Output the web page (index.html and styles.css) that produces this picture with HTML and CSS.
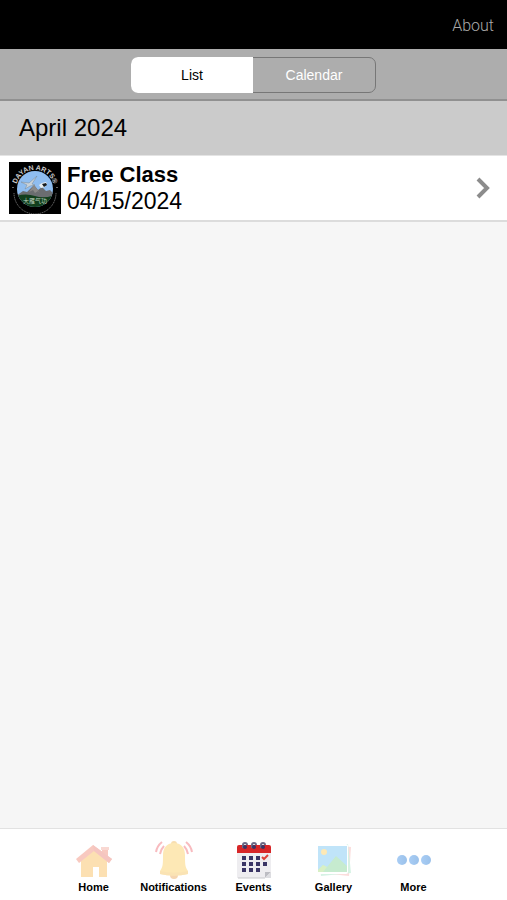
FILE: index.html
```
<!DOCTYPE html>
<html lang="en">
<head>
    <meta charset="UTF-8">
    <meta name="viewport" content="width=device-width, initial-scale=1.0">
    <title>Events</title>
    <link rel="stylesheet" href="styles.css">
</head>
<body>
    <div id="app">
        <header class="topbar">
            <a href="#about">About</a>
        </header>
        <div class="toolbar">
            <div class="switch">
                <button type="button" class="active" aria-pressed="true">List</button>
                <button type="button" aria-pressed="false">Calendar</button>
            </div>
        </div>
        <main>
            <h2 class="month">April 2024</h2>
            <a class="event" href="#event">
                <svg class="logo" viewBox="0 0 52 52" aria-hidden="true">
                    <defs>
                        <clipPath id="disc"><circle cx="26" cy="27" r="18"/></clipPath>
                        <path id="arc" d="M7 27a19 19 0 0 1 38 0"/>
                    </defs>
                    <rect width="52" height="52" fill="#000"/>
                    <g clip-path="url(#disc)">
                        <rect x="7" y="8" width="38" height="38" fill="#8fbdf0"/>
                        <path d="M7 34l7-5 4 1 7-7 4 5 4-3 4 4 4-1 5 5v5H7z" fill="#6b6d70"/>
                        <path d="M25 23l-5 7 4-2 2 3 3-2 2 2z" fill="#8b8988"/>
                        <path d="M7 34q10-3 19 0t19-1v15H7z" fill="#123f1d"/>
                    </g>
                    <path d="M12 20l8 1 8-7-5 8 3 1-5 1-5 3 2-4z" fill="#c9d2da" stroke="#6a7884" stroke-width=".4"/>
                    <path d="M30 23l3-2 4-1 1 2-2 3-4 1z" fill="#e9eef0"/>
                    <path d="M33 22l4-1 1 2-3 2z" fill="#151b20"/>
                    <text class="logo-name"><textPath href="#arc" startOffset="50%">DAYAN ARTS®</textPath></text>
                    <text class="logo-mark" x="26" y="41">大雁气功</text>
                    <path d="M5 31a21 21 0 0 0 42 0" fill="none" stroke="#777" stroke-dasharray="1.2 .7"/>
                    <path d="M4 26v-1M48 26v-1" stroke="#ccc"/>
                </svg>
                <span class="details">
                    <strong>Free Class</strong>
                    <span>04/15/2024</span>
                </span>
                <svg class="chevron" viewBox="0 0 14 22" aria-hidden="true">
                    <path d="M2 2l9 9-9 9" fill="none" stroke="#8c8c8c" stroke-width="4"/>
                </svg>
            </a>
        </main>
        <nav class="tabs">
            <a href="#home">
                <svg class="faded" viewBox="0 0 40 40" aria-hidden="true">
                    <path d="M7 20L20 9l13 11v17h-8V27h-6v10H7z" fill="#f9a825"/>
                    <path d="M28 7h6v10l-6-5z" fill="#ed684e"/>
                    <path d="M27 7h8v3h-8z" fill="#ee9280"/>
                    <path d="M19 5L2 19l3 4 15-12 15 12 3-4z" fill="#ed684e"/>
                    <path d="M19 5l1 6 15 12 3-4z" fill="#e45c4d"/>
                </svg>
                Home
            </a>
            <a href="#notifications">
                <svg class="faded" viewBox="0 0 40 40" aria-hidden="true">
                    <circle cx="20" cy="4" r="3" fill="#eda21f"/>
                    <path d="M16 35h8a4 4 0 0 1-8 0z" fill="#e58b22"/>
                    <path d="M20 3c-8 0-11 6-11 12 0 9 0 12-3 16v3q14 3 28 0v-3c-3-4-3-7-3-16C31 9 28 3 20 3z" fill="#fbc02d"/>
                    <path d="M6 31q14 3 28 0v3q-14 3-28 0z" fill="#f3b22c"/>
                    <path d="M8 2Q3 6 2 12M10 6Q7 9 6 14M32 2q5 4 6 10M30 6q3 3 4 8" fill="none" stroke="#ed3f4b" stroke-width="2"/>
                </svg>
                Notifications
            </a>
            <a href="#events" aria-current="page">
                <svg viewBox="0 0 40 40" aria-hidden="true">
                    <path d="M3 10h34v22l-6 6H3z" fill="#eeedf0"/>
                    <path d="M4 38h27" stroke="#c9c9cd"/>
                    <path d="M31 38v-6h6z" fill="#bdbdc3"/>
                    <path d="M31 38h6v-6z" fill="#dddde1"/>
                    <path d="M3 7q0-2 2-2h30q2 0 2 2v6H3z" fill="#d72628"/>
                    <g fill="none" stroke="#6c6984" stroke-width="2">
                        <path d="M9 8V5q0-2 2-2t2 2M18 8V5q0-2 2-2t2 2M27 8V5q0-2 2-2t2 2"/>
                    </g>
                    <g fill="#3a3565">
                        <circle cx="11" cy="7" r="2"/><circle cx="20" cy="7" r="2"/><circle cx="29" cy="7" r="2"/>
                        <path d="M8 16h4v4H8zM15 16h4v4h-4zM22 16h4v4h-4zM8 22h4v4H8zM15 22h4v4h-4zM22 22h4v4h-4zM29 22h4v4h-4zM8 28h4v4H8zM15 28h4v4h-4zM22 28h4v4h-4z"/>
                    </g>
                    <path d="M28 17l2 2 4-4" fill="none" stroke="#dd4038" stroke-width="2"/>
                </svg>
                Events
            </a>
            <a href="#gallery">
                <svg class="faded" viewBox="0 0 40 40" aria-hidden="true">
                    <path d="M8 4l29 3-2 29-28-3z" fill="#f4a09e"/>
                    <path d="M4 7l30-3 3 29-30 3z" fill="#8bdcb5"/>
                    <rect x="3" y="4" width="31" height="30" rx="2" fill="#fff"/>
                    <rect x="4" y="6" width="29" height="26" fill="#4eb4ee"/>
                    <circle cx="10" cy="12" r="3" fill="#fdc12f"/>
                    <path d="M4 30l5-5 4 2 9-11 11 10v6H4z" fill="#5dc777"/>
                    <path d="M4 30l5-5 4 2-4 5H4z" fill="#91d75b"/>
                </svg>
                Gallery
            </a>
            <a href="#more">
                <svg viewBox="0 0 40 40" aria-hidden="true">
                    <defs>
                        <linearGradient id="dot"><stop stop-color="#a8cdf5"/><stop offset="1" stop-color="#9bc1ea"/></linearGradient>
                    </defs>
                    <g fill="url(#dot)">
                        <circle cx="8" cy="20" r="5"/><circle cx="20" cy="20" r="5"/><circle cx="32" cy="20" r="5"/>
                    </g>
                </svg>
                More
            </a>
        </nav>
    </div>
</body>
</html>
```
FILE: styles.css
```
*{
    margin: 0;
    padding: 0;
    box-sizing: border-box;
}
body{
    font-family: "Liberation Sans", Arial, sans-serif;
    color: #000;
    background-color: #f6f6f6;
}
a{
    color: inherit;
    text-decoration: none;
}
#app{
    display: flex;
    flex-direction: column;
    min-height: 100vh;
}
.topbar{
    display: flex;
    align-items: center;
    justify-content: flex-end;
    height: 49px;
    padding: 2px 13px 0;
    background-color: #000;
}
.topbar a{
    font-family: Roboto, "Liberation Sans", sans-serif;
    font-weight: 300;
    font-size: 16px;
    color: #aaa;
}
.toolbar{
    display: flex;
    justify-content: center;
    padding: 8px 0 6px;
    background-color: #adadad;
    border-bottom: 2px solid #909090;
}
.switch{
    display: flex;
    width: 245px;
    height: 36px;
    border: 1px solid #777;
    border-radius: 7px;
}
.switch button{
    flex: 1;
    border: 0;
    font: 14px "Liberation Sans", Arial, sans-serif;
    color: #fff;
    background: none;
    cursor: pointer;
}
.switch .active{
    margin: -1px 0 -1px -1px;
    color: #000;
    background-color: #fff;
    border-radius: 7px 0 0 7px;
}
main{
    flex: 1;
}
.month{
    padding: 0 19px;
    font-size: 24px;
    font-weight: 400;
    line-height: 54px;
    background-color: #cbcbcb;
}
.event{
    display: flex;
    align-items: center;
    gap: 6px;
    padding: 6px 17px 6px 9px;
    background-color: #fff;
    border-top: 1px solid #e4e4e4;
    border-bottom: 2px solid #dcdcdc;
}
.logo{
    width: 52px;
    height: 52px;
}
.logo-name{
    font-size: 7px;
    font-weight: 700;
    fill: #ccc;
    text-anchor: middle;
}
.logo-mark{
    font-family: "Noto Sans CJK SC", sans-serif;
    font-size: 6px;
    fill: #b9d1bd;
    text-anchor: middle;
}
.details{
    display: flex;
    flex: 1;
    flex-direction: column;
    font-size: 23px;
    line-height: 26px;
}
.details strong{
    font-size: 22px;
}
.chevron{
    width: 14px;
    height: 22px;
}
.tabs{
    display: flex;
    justify-content: center;
    height: 72px;
    padding-top: 11px;
    background-color: #fff;
    border-top: 1px solid #e2e2e2;
}
.tabs a{
    display: flex;
    flex: 0 1 80px;
    flex-direction: column;
    align-items: center;
    font-size: 11px;
    font-weight: 700;
    line-height: 14px;
}
.tabs svg{
    width: 40px;
    height: 40px;
}
.tabs .faded{
    opacity: .35;
}
```
